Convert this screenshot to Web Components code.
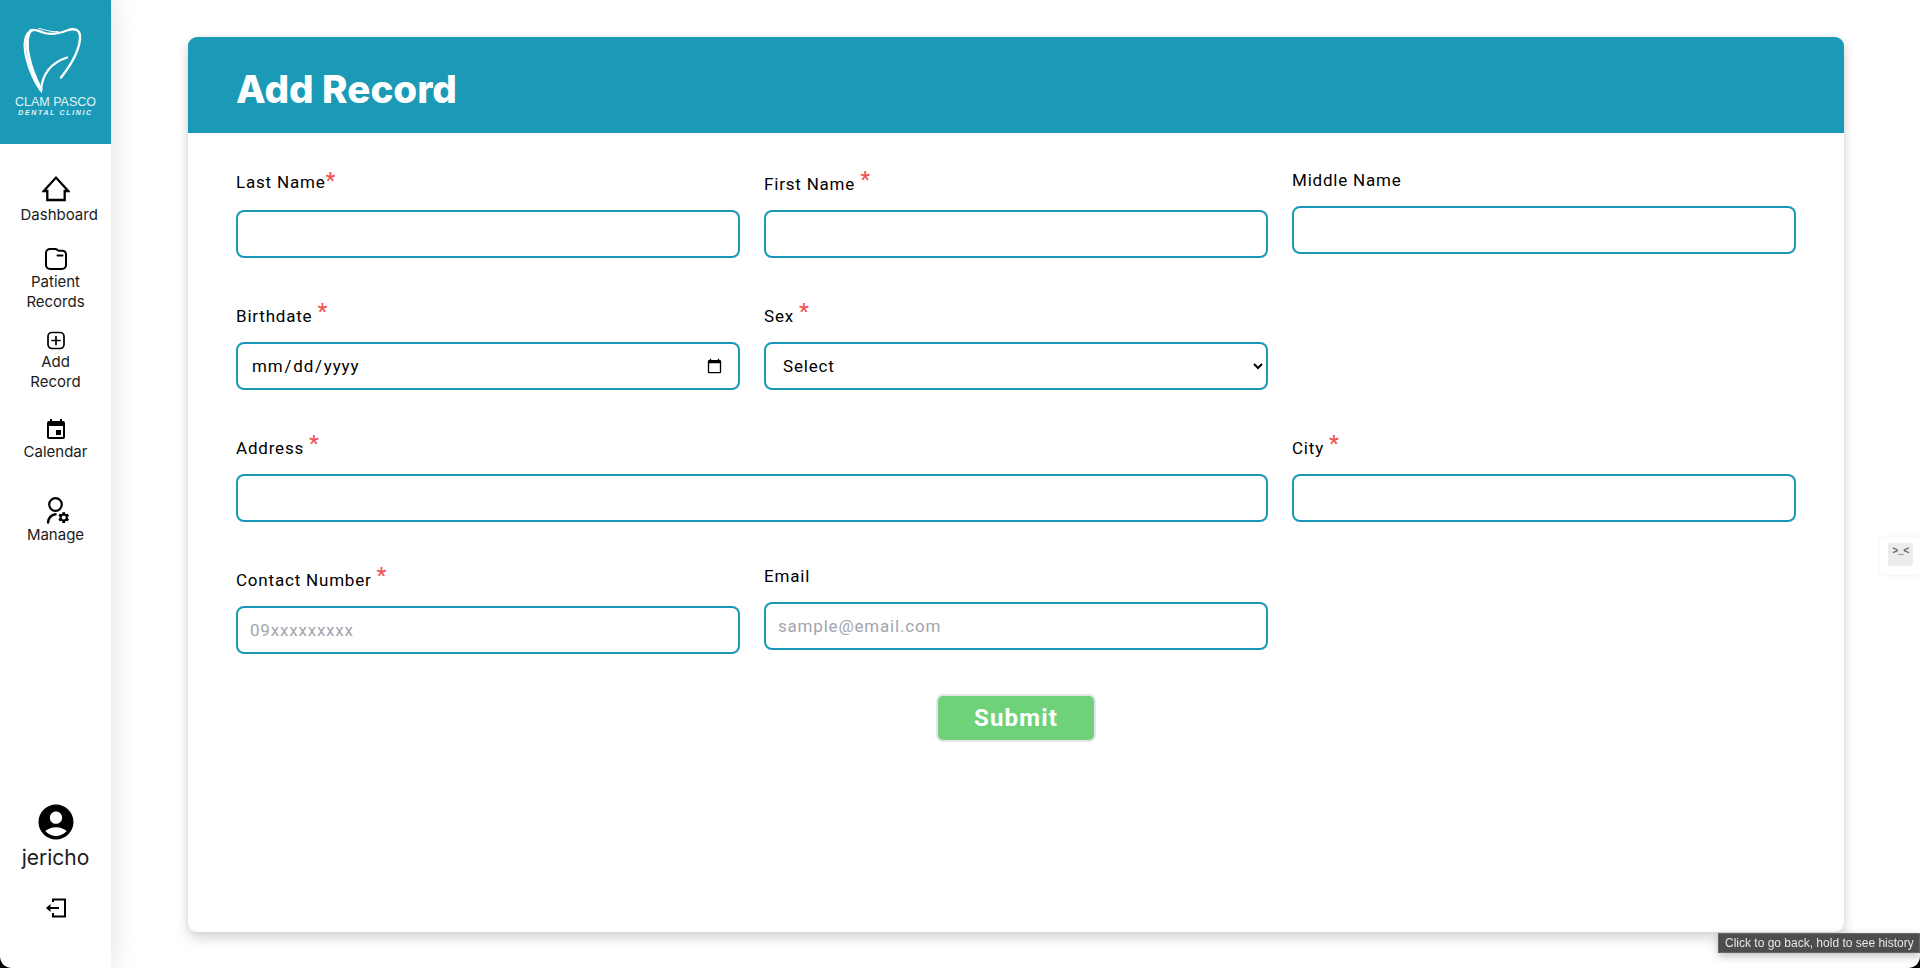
<!DOCTYPE html>
<html lang="en">
<head>
<meta charset="utf-8">
<title>Add Record</title>
<style>
  html, body { margin: 0; height: 100%; overflow: hidden; background: #fff; }
</style>
</head>
<body>
<app-shell>
  <side-bar slot="side">
    <clinic-logo slot="logo"></clinic-logo>
    <nav-link label="Dashboard" top="31">
      <svg width="28" height="28" viewBox="0 0 28 28" fill="none" stroke="#000" stroke-width="2.3"><path d="M1.800 16 14 2.600 26.200 16H22.700V25H5.300V16Z"/></svg>
    </nav-link>
    <nav-link label="Patient Records" top="22">
      <svg width="24" height="23" viewBox="0 0 24 23" fill="none" stroke="#000" stroke-width="2" stroke-linecap="round" stroke-linejoin="round"><path d="M2 6a4 4 0 0 1 4-4h5.500c1.500 0 2.200 1.800 3.500 1.800h3.500A3.500 3.500 0 0 1 22 7.300V18a4 4 0 0 1-4 4H6a4 4 0 0 1-4-4Z"/><path d="M13.500 8.500h5"/></svg>
    </nav-link>
    <nav-link label="Add Record" top="19">
      <svg width="20" height="19" viewBox="0 0 20 19" fill="none" stroke="#000" stroke-width="1.700" stroke-linecap="round"><rect x="2" y="1.500" width="16" height="16" rx="4"/><path d="M10 5.500v8M6 9.500h8"/></svg>
    </nav-link>
    <nav-link label="Calendar" top="26" gap="0">
      <svg width="24" height="24" viewBox="0 0 24 24"><path d="M17 12h-5v5h5v-5zM16 1v2H8V1H6v2H5c-1.110 0-1.990.900-1.990 2L3 19c0 1.100.890 2 2 2h14c1.100 0 2-.900 2-2V5c0-1.100-.900-2-2-2h-1V1h-2zm3 18H5V8h14v11z"/></svg>
    </nav-link>
    <nav-link label="Manage" top="35" gap="0">
      <svg width="30" height="28" viewBox="0 0 30 28">
        <circle cx="14.500" cy="7.500" r="6.300" fill="none" stroke="#000" stroke-width="2.200"/>
        <path d="M7 25.500c.600-4.400 3.300-7.600 7.500-8.200" fill="none" stroke="#000" stroke-width="2.400" stroke-linecap="round"/>
        <g transform="translate(16 13.800) scale(.56)"><path d="M19.14 12.94c.04-.3.06-.61.06-.94 0-.32-.02-.64-.07-.94l2.03-1.58c.18-.14.23-.41.12-.61l-1.92-3.32c-.12-.22-.37-.29-.59-.22l-2.39.96c-.5-.38-1.03-.7-1.62-.94l-.36-2.54c-.04-.24-.24-.41-.48-.41h-3.84c-.24 0-.43.17-.47.41l-.36 2.54c-.59.24-1.13.57-1.62.94l-2.39-.96c-.22-.08-.47 0-.59.22L2.74 8.87c-.12.21-.08.47.12.61l2.03 1.58c-.05.3-.09.63-.09.94s.02.64.07.94l-2.03 1.58c-.18.14-.23.41-.12.61l1.92 3.32c.12.22.37.29.59.22l2.39-.96c.5.38 1.03.7 1.62.94l.36 2.54c.05.24.24.41.48.41h3.84c.24 0 .44-.17.47-.41l.36-2.54c.59-.24 1.13-.56 1.62-.94l2.39.96c.22.08.47 0 .59-.22l1.92-3.32c.12-.22.07-.47-.12-.61l-2.01-1.58zM12 15.6c-1.98 0-3.6-1.62-3.6-3.6s1.62-3.6 3.6-3.6 3.6 1.62 3.6 3.6-1.62 3.6-3.6 3.6z"/></g>
      </svg>
    </nav-link>
    <user-box slot="user" name="jericho"></user-box>
  </side-bar>

  <record-card slot="main" heading="Add Record">
    <form-field label="Last Name" required="tight"></form-field>
    <form-field label="First Name" required></form-field>
    <form-field label="Middle Name"></form-field>
    <form-field label="Birthdate" required type="date"></form-field>
    <form-field label="Sex" required type="select"></form-field>
    <form-spacer></form-spacer>
    <form-field label="Address" required span="2"></form-field>
    <form-field label="City" required></form-field>
    <form-field label="Contact Number" required placeholder="09xxxxxxxxx"></form-field>
    <form-field label="Email" placeholder="sample@email.com"></form-field>
    <submit-button slot="actions">Submit</submit-button>
  </record-card>
</app-shell>
<side-widget></side-widget>
<back-tooltip>Click to go back, hold to see history</back-tooltip>
<window-corners></window-corners>

<script>
  const SIDE_FONT = '"Inter", "Open Sans", sans-serif';
  const FORM_FONT = 'Roboto, "Open Sans", sans-serif';
  const TEAL = '#1a9ab6';

  // small helper, every element below does the same thing in its constructor
  class ShadowEl extends HTMLElement {
    constructor() {
      super();
      this.attachShadow({ mode: 'open' });
    }
    connectedCallback() {
      this.render();
    }
    render() {}
  }

  class AppShell extends ShadowEl {
    render() {
      this.shadowRoot.innerHTML = `
        <style>
          :host { display: flex; height: 968px; }
          main { flex: 1; min-width: 0; display: flex; padding: 37px 76px 36px 77px; }
          ::slotted(record-card) { flex: 1; min-width: 0; }
        </style>
        <slot name="side"></slot>
        <main><slot name="main"></slot></main>
      `;
    }
  }

  class SideBar extends ShadowEl {
    render() {
      this.shadowRoot.innerHTML = `
        <style>
          :host {
            display: flex; flex-direction: column; flex: none;
            width: 111px; background: #fff;
            box-shadow: 0 0 28px rgba(0, 0, 0, .13);
          }
          nav { display: flex; flex-direction: column; }
          .user { margin-top: auto; }
        </style>
        <slot name="logo"></slot>
        <nav><slot></slot></nav>
        <div class="user"><slot name="user"></slot></div>
      `;
    }
  }

  class ClinicLogo extends ShadowEl {
    render() {
      this.shadowRoot.innerHTML = `
        <style>
          :host {
            display: flex; flex-direction: column; align-items: center;
            height: 144px; box-sizing: border-box; padding-top: 25px;
            background: ${TEAL}; color: #e4f3f6;
          }
          svg { display: block; margin-left: -3px; }
          .name { font: 400 12.5px/12px "Liberation Sans", sans-serif; margin-top: 2px; white-space: nowrap; }
          .sub { font: italic 700 7px/9px "Liberation Sans", sans-serif; letter-spacing: 1.650px; margin-top: 0; white-space: nowrap; }
        </style>
        <svg width="62" height="69" viewBox="0 0 62 68" fill="none" stroke="#fff" stroke-linecap="round">
          <path d="M9 5C2 7 0 18 3 31c3 14 10 28 15 34 1-14 8-27 26-33" stroke-width="2.200"/>
          <path d="M8 5C4 9 3 20 6 32c2 10 7 22 12 32" stroke-width="3"/>
          <path d="M38 52c8-10 18-25 19-39 .6-9-5-11-13-8-8 3-16 5-24 2-4-1.500-8-4-12-2" stroke-width="2.400"/>
          <path d="M16 3c6 1 12 4 19 3" stroke-width="1"/>
        </svg>
        <div class="name">CLAM PASCO</div>
        <div class="sub">DENTAL CLINIC</div>
      `;
    }
  }

  class NavLink extends ShadowEl {
    render() {
      const top = this.getAttribute('top') || 0;
      const gap = this.getAttribute('gap') || 2;
      this.shadowRoot.innerHTML = `
        <style>
          :host {
            display: flex; flex-direction: column; align-items: center;
            margin-top: ${top}px; color: #1b1b1b;
            font: 400 15px/20px ${SIDE_FONT}; text-align: center;
          }
          .label { width: 70px; margin-top: ${gap}px; }
          ::slotted(svg) { display: block; }
        </style>
        <slot></slot>
        <div class="label">${this.getAttribute('label')}</div>
      `;
    }
  }

  class UserBox extends ShadowEl {
    render() {
      this.shadowRoot.innerHTML = `
        <style>
          :host {
            display: flex; flex-direction: column; align-items: center;
            padding-bottom: 50px; color: #1b1b1b;
            font: 400 21px/26px ${SIDE_FONT};
          }
          svg { display: block; }
          .name { margin-top: 2px; margin-bottom: 27px; }
        </style>
        <svg width="42" height="42" viewBox="0 0 24 24"><path d="M12 2C6.480 2 2 6.480 2 12s4.480 10 10 10 10-4.480 10-10S17.520 2 12 2zm0 4c1.930 0 3.500 1.570 3.500 3.500S13.930 13 12 13s-3.500-1.570-3.500-3.500S10.070 6 12 6zm0 14c-2.030 0-4.430-.82-6.140-2.880C7.550 15.800 9.680 15 12 15s4.450.8 6.140 2.120C16.430 19.180 14.030 20 12 20z"/></svg>
        <div class="name">${this.getAttribute('name')}</div>
        <svg width="22" height="20" viewBox="0 0 22 20" fill="none" stroke="#000" stroke-width="2">
          <path d="M8 4V1.500H20V18.500H8V15"/>
          <path d="M14 10H4"/>
          <path d="M1 10l4.500-4v8Z" fill="#000" stroke="none"/>
        </svg>
      `;
    }
  }

  class RecordCard extends ShadowEl {
    render() {
      this.shadowRoot.innerHTML = `
        <style>
          :host {
            display: flex; flex-direction: column; background: #fff;
            border-radius: 9px;
            box-shadow: 0 6px 13px rgba(0, 0, 0, .17), 0 0 6px rgba(0, 0, 0, .05);
          }
          header {
            height: 96px; box-sizing: border-box; padding: 7px 0 0 48px;
            display: flex; align-items: center; background: ${TEAL};
            border-radius: 9px 9px 0 0; color: #fff;
          }
          h1 { margin: 0; font: 800 38.6px/44px ${SIDE_FONT}; }
          .body { padding: 35px 48px; }
          .grid { display: grid; grid-template-columns: repeat(3, 1fr); gap: 42px 24px; align-items: start; }
          .actions { display: flex; justify-content: center; margin-top: 40px; }
        </style>
        <header><h1>${this.getAttribute('heading')}</h1></header>
        <div class="body">
          <div class="grid"><slot></slot></div>
          <div class="actions"><slot name="actions"></slot></div>
        </div>
      `;
    }
  }

  class FormSpacer extends ShadowEl {
    render() {
      this.shadowRoot.innerHTML = `<style>:host { display: block; }</style>`;
    }
  }

  class FormField extends ShadowEl {
    render() {
      const label = this.getAttribute('label');
      const type = this.getAttribute('type') || 'text';
      const placeholder = this.getAttribute('placeholder') || '';
      const required = this.getAttribute('required');
      const span = this.getAttribute('span');
      const isRequired = required !== null;
      const tight = required === 'tight';

      let control = `<input type="${type}" placeholder="${placeholder}">`;
      if (type === 'select') {
        control = `<select><option>Select</option><option>Male</option><option>Female</option></select>`;
      }

      const star = isRequired ? `<span class="star${tight ? ' tight' : ''}">*</span>` : '';

      this.shadowRoot.innerHTML = `
        <style>
          :host {
            display: block; min-width: 0;
            ${span ? `grid-column: span ${span};` : ''}
            font: 400 17px/20px ${FORM_FONT}; color: #000;
          }
          .label {
            display: flex; align-items: flex-end;
            height: ${isRequired ? 42 : 38}px; box-sizing: border-box;
            padding-bottom: ${tight ? 18 : 16}px;
            letter-spacing: .8px;
          }
          .star {
            color: #f05454; font-size: 22px; font-weight: 500; line-height: 20px;
            align-self: flex-start; margin-left: ${tight ? 0 : 5}px;
            padding-top: ${tight ? 3 : 2}px; letter-spacing: 0;
          }
          input, select {
            display: block; width: 100%; height: 48px; box-sizing: border-box;
            border: 2px solid ${TEAL}; border-radius: 8px; outline: none;
            background: #fff; color: #000; padding: 0 13px;
            font: 400 17px ${FORM_FONT}; letter-spacing: .8px;
          }
          select { padding-right: 0; }
          input::placeholder { color: #a2a5ad; }
          input:not([type="date"]) { padding-left: 12px; }
        </style>
        <div class="label"><span>${label}</span>${star}</div>
        ${control}
      `;
    }
  }

  class SubmitButton extends ShadowEl {
    render() {
      this.shadowRoot.innerHTML = `
        <style>
          :host { display: block; }
          button {
            display: block; width: 160px; height: 48px; box-sizing: border-box;
            background: #6fd27a; border: 2px solid #e4e6ea; border-radius: 7px;
            color: #fff; font: 700 24px ${FORM_FONT}; letter-spacing: 1.2px;
          }
        </style>
        <button type="button"><slot></slot></button>
      `;
    }
  }

  class SideWidget extends ShadowEl {
    render() {
      this.shadowRoot.innerHTML = `
        <style>
          :host {
            position: fixed; right: 0; top: 537px; width: 40px; height: 38px;
            box-sizing: border-box; padding: 6px 0 0 8px;
            background: #fff; border-radius: 6px 0 0 6px;
            box-shadow: 0 0 5px rgba(0, 0, 0, .07);
          }
          div {
            width: 25px; height: 23px; background: #ececec; border-radius: 2px;
            color: #666; font: 700 10px/17px "Liberation Mono", monospace; text-align: center; letter-spacing: -.5px;
          }
        </style>
        <div>&gt;_&lt;</div>
      `;
    }
  }

  class BackTooltip extends ShadowEl {
    render() {
      this.shadowRoot.innerHTML = `
        <style>
          :host {
            position: fixed; left: 1718px; top: 933px; width: 202px; height: 20px;
            box-sizing: border-box; padding-left: 6px;
            background: #4d4d4d; border: 1px solid #666; color: #e6e6e6;
            font: 400 12px/18px "Liberation Sans", sans-serif; white-space: nowrap;
            box-shadow: 0 3px 8px rgba(0, 0, 0, .25);
          }
        </style>
        <slot></slot>
      `;
    }
  }

  // the black rounded corners of the window at the bottom of the screenshot
  class WindowCorners extends ShadowEl {
    render() {
      const corner = (side) => `<svg style="${side}: 0" width="12" height="12" viewBox="0 0 12 12"><path d="${side === 'left' ? 'M0 0C0 7 5 12 12 12H0Z' : 'M12 0C12 7 7 12 0 12H12Z'}"/></svg>`;
      this.shadowRoot.innerHTML = `
        <style>
          :host { position: fixed; left: 0; right: 0; bottom: 0; height: 12px; pointer-events: none; }
          svg { position: absolute; bottom: 0; }
        </style>
        ${corner('left')}${corner('right')}
      `;
    }
  }

  customElements.define('app-shell', AppShell);
  customElements.define('side-bar', SideBar);
  customElements.define('clinic-logo', ClinicLogo);
  customElements.define('nav-link', NavLink);
  customElements.define('user-box', UserBox);
  customElements.define('record-card', RecordCard);
  customElements.define('form-spacer', FormSpacer);
  customElements.define('form-field', FormField);
  customElements.define('submit-button', SubmitButton);
  customElements.define('side-widget', SideWidget);
  customElements.define('back-tooltip', BackTooltip);
  customElements.define('window-corners', WindowCorners);
</script>
</body>
</html>
